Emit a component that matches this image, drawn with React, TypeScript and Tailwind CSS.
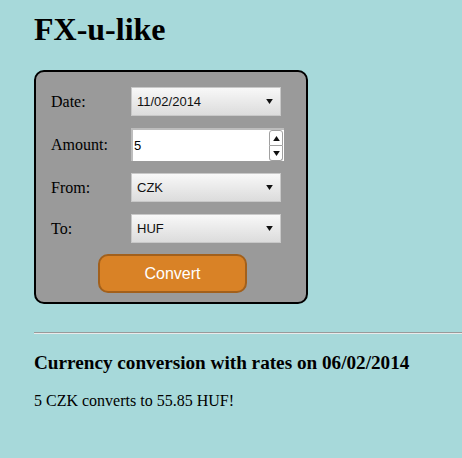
import React from 'react';

const serif = { fontFamily: '"Liberation Serif", "Times New Roman", serif' };

const Arrow: React.FC<{ up?: boolean; className?: string }> = ({ up, className }) => (
  <svg width="7" height="5" viewBox="0 0 8 6" className={className}>
    <path d={up ? 'M0 6 L4 0 L8 6 Z' : 'M0 0 L8 0 L4 6 Z'} fill="#111" />
  </svg>
);

const Select: React.FC<{ value: string }> = ({ value }) => (
  <div className="flex h-[29px] w-[150px] items-center justify-between border border-[#c8c8c8] bg-gradient-to-b from-[#f8f8f8] to-[#dcdcdc] pl-[5px] pr-[7px] font-['Liberation_Sans',Arial,sans-serif] text-[13px] text-[#111]">
    <span>{value}</span>
    <Arrow />
  </div>
);

const Row: React.FC<{ label: string; children: React.ReactNode }> = ({ label, children }) => (
  <div className="flex items-center">
    <span className="w-[80px] text-base text-black" style={serif}>{label}</span>
    {children}
  </div>
);

export default function App() {
  return (
    <div className="min-h-screen bg-[#a7d9da] pl-[34px] pt-[11px]" style={serif}>
      <h1 className="text-[32px] font-bold leading-[37px] text-black">FX-u-like</h1>

      <div className="mt-[22px] flex w-[274px] flex-col gap-[12px] rounded-[10px] border-2 border-black bg-[#9a9a9a] pb-[9px] pl-[15px] pt-[15px]">
        <Row label="Date:">
          <Select value="11/02/2014" />
        </Row>
        <Row label="Amount:">
          <div className="flex h-[33px] w-[153px] items-center border-t-2 border-l-2 border-t-[#bdbdbd] border-l-[#bdbdbd] bg-white pl-[1px] pr-[1px]">
            <span className="flex-1 font-['Liberation_Sans',Arial,sans-serif] text-[13px] text-black">5</span>
            <div className="flex h-[31px] w-[14px] flex-col">
              <div className="flex flex-1 items-center justify-center rounded-t-[3px] border border-[#a0a0a0] bg-white">
                <Arrow up />
              </div>
              <div className="flex flex-1 items-center justify-center rounded-b-[3px] border border-t-0 border-[#a0a0a0] bg-white">
                <Arrow />
              </div>
            </div>
          </div>
        </Row>
        <Row label="From:">
          <Select value="CZK" />
        </Row>
        <Row label="To:">
          <Select value="HUF" />
        </Row>
        <div className="-mt-[1px] flex pl-[47px]">
          <button className="h-[39px] w-[149px] rounded-[10px] border-2 border-[#a2601c] bg-[#d98226] font-['Liberation_Sans',Arial,sans-serif] text-base text-white">
            Convert
          </button>
        </div>
      </div>

      <div className="mt-[28px] border-t border-b border-t-[#9a9a9a] border-b-[#eaeaea]" />

      <h3 className="mt-[18px] text-[19.2px] font-bold leading-[22px] text-black">
        Currency conversion with rates on 06/02/2014
      </h3>
      <p className="mt-[18px] text-base leading-[18px] text-black">5 CZK converts to 55.85 HUF!</p>
    </div>
  );
}
